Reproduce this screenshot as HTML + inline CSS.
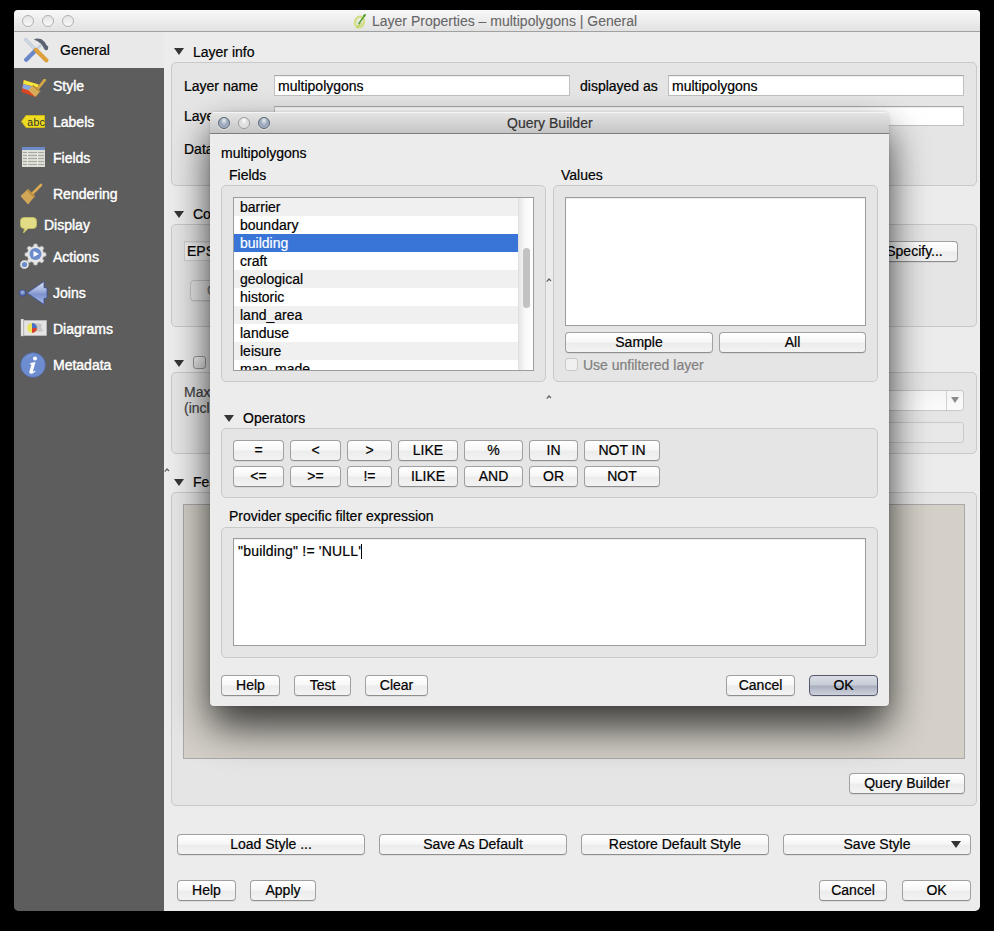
<!DOCTYPE html>
<html><head><meta charset="utf-8">
<style>
*{box-sizing:border-box;margin:0;padding:0}
html,body{width:994px;height:931px;overflow:hidden;background:#000}
body{position:relative;font-family:"Liberation Sans",sans-serif;font-size:14px;color:#000;-webkit-text-stroke:0.2px}
.a{position:absolute}
.t{position:absolute;white-space:nowrap;line-height:16px}
.tl{position:absolute;width:12px;height:12px;border-radius:50%;border:1px solid #b0b0b0;background:linear-gradient(#e4e4e4,#f8f8f8)}
.tlb{position:absolute;width:12px;height:12px;border-radius:50%;border:1px solid #5b6573;background:radial-gradient(ellipse at 50% 25%,#eef2f6 0,#b4bfcd 30%,#95a3b6 55%,#c8d1dc 100%);box-shadow:0 1px 0 rgba(255,255,255,0.5)}
.grp{position:absolute;border:1px solid #c9c9c9;border-radius:5px;background:#e5e5e5}
.inp{position:absolute;background:#fff;border:1px solid #c0c0c0;border-top-color:#a8a8a8;box-shadow:inset 0 1px 1px rgba(0,0,0,0.07)}
.btn{position:absolute;height:21px;border:1px solid #a0a0a0;border-bottom-color:#8e8e8e;border-radius:4px;background:linear-gradient(#ffffff,#f7f7f7 45%,#ececec 55%,#f3f3f3);text-align:center;line-height:19px;white-space:nowrap;box-shadow:0 1px 0 rgba(0,0,0,0.06)}
.tri{position:absolute;width:0;height:0;border-left:5px solid transparent;border-right:5px solid transparent;border-top:7px solid #353535}
.si{position:absolute;color:#fff;white-space:nowrap;line-height:16px;text-shadow:0 1px 1px rgba(0,0,0,0.35);-webkit-text-stroke:0.45px #fff}
.row{position:absolute;left:0;width:284px;height:18px;line-height:18px;padding-left:6px;white-space:nowrap}
</style></head><body>
<!-- main window -->
<div class="a" style="left:14px;top:10px;width:966px;height:901px;background:linear-gradient(to right,#5d5d5d 150px,#ececec 150px);border-radius:4px 4px 5px 5px;overflow:hidden">
  <div class="a" style="left:0;top:0;width:966px;height:22px;background:linear-gradient(#f8f8f8,#e2e2e2);border-bottom:1px solid #a0a0a0"></div>
  <div class="a" style="left:0;top:22px;width:150px;height:879px;background:#5d5d5d"></div>
  <div class="a" style="left:0;top:22px;width:150px;height:36px;background:#e9e9e9"></div>
</div>
<div class="tl" style="left:22px;top:15px"></div>
<div class="tl" style="left:42px;top:15px"></div>
<div class="tl" style="left:62px;top:15px"></div>
<div class="t" style="left:372px;top:13px;color:#666;-webkit-text-stroke:0.1px">Layer Properties – multipolygons | General</div>


<!-- sidebar icons -->
<svg class="a" style="left:24px;top:38px" width="25" height="25" viewBox="0 0 25 25">
  <line x1="1" y1="1" x2="11" y2="11" stroke="#a9b3c8" stroke-width="3" stroke-linecap="round"/>
  <line x1="1" y1="1" x2="11" y2="11" stroke="#d3dae8" stroke-width="1.8" stroke-linecap="round"/>
  <line x1="2.2" y1="21.8" x2="11.5" y2="12.5" stroke="#6a86c8" stroke-width="4.2" stroke-linecap="round"/>
  <line x1="12.5" y1="11.5" x2="17" y2="7" stroke="#c8d0de" stroke-width="2.8"/>
  <path d="M9.8,1.6 Q13,-0.4 17.5,1.2 Q20.8,3.2 22.6,7.2 L24.2,8.6 L24,11.6 L21.8,12.4 L20.2,11 Q18.6,7.6 16.6,5.6 Q14,3.2 9.8,1.6 Z" fill="#5b6372"/>
  <line x1="12" y1="12" x2="22.3" y2="22.3" stroke="#dc9c38" stroke-width="4.2" stroke-linecap="round"/>
  <line x1="13" y1="12.5" x2="22" y2="21.5" stroke="#f0c060" stroke-width="1" stroke-dasharray="1 1"/>
</svg>
<svg class="a" style="left:21px;top:79px" width="26" height="19" viewBox="0 0 26 19">
  <path d="M2.8,0.9 L17.6,5.4 L14.4,17.9 L0.5,13.1 Z" fill="#de4422"/>
  <path d="M2.8,0.9 L17.6,5.4 L16.6,8.6 L2.2,5 Z" fill="#f2ea3a"/>
  <path d="M2.2,5 L13,8 L9.5,12 L1.2,9.2 Z" fill="#86a8e0"/>
  <line x1="17.4" y1="9" x2="23.6" y2="1.2" stroke="#d4a848" stroke-width="2.8" stroke-linecap="round"/>
  <path d="M7.3,11.2 L12.1,6 L19.5,12.1 L14.4,17.9 Z" fill="#d6ac58"/>
  <path d="M12.1,6 L19.5,12.1 L18.6,13.2 L11.2,7 Z" fill="#b88c34"/>
</svg>
<svg class="a" style="left:21px;top:115px" width="25" height="14" viewBox="0 0 25 14">
  <path d="M5,0.5 L23.5,0.5 L23.5,12.5 L5,12.5 L0.5,6.5 Z" fill="#eedd22" stroke="#cdb818" stroke-width="1"/>
  <text x="6.3" y="10.5" font-family="Liberation Sans" font-size="10.5" letter-spacing="0.3" fill="#2a2a2a" style="-webkit-text-stroke:0">abc</text>
</svg>
<svg class="a" style="left:22px;top:147px" width="23" height="20" viewBox="0 0 23 20">
  <rect x="0" y="0" width="23" height="20" fill="#dcded6"/>
  <rect x="0" y="0" width="23" height="3" fill="#6d8bc8"/>
  <g stroke="#a2a29a" stroke-width="0.9">
    <line x1="1" y1="5.5" x2="22" y2="5.5"/><line x1="1" y1="8.5" x2="22" y2="8.5"/><line x1="1" y1="11.5" x2="22" y2="11.5"/><line x1="1" y1="14.5" x2="22" y2="14.5"/><line x1="1" y1="17.5" x2="22" y2="17.5"/>
  </g>
  <g stroke="#e8e8e2" stroke-width="1"><line x1="5.5" y1="3" x2="5.5" y2="20"/><line x1="15.5" y1="3" x2="15.5" y2="20"/></g>
</svg>
<svg class="a" style="left:20px;top:183px" width="23" height="23" viewBox="0 0 23 23">
  <line x1="13" y1="10" x2="21" y2="2" stroke="#d9aa50" stroke-width="2.6" stroke-linecap="round"/>
  <path d="M0.5,13 L8,6 L15,13 L8,21.5 Z" fill="#d2a858"/>
  <path d="M8,6 L15,13 L14,15 L7,8 Z" fill="#b8903c"/>
</svg>
<svg class="a" style="left:20px;top:217px" width="17" height="17" viewBox="0 0 17 17">
  <path d="M4,0.5 H13 Q16.5,0.5 16.5,4 V8 Q16.5,11.5 13,11.5 H8 L3.5,16 L4.5,11.5 Q0.5,11.5 0.5,8 V4 Q0.5,0.5 4,0.5 Z" fill="#e3dc86" stroke="#c8c060" stroke-width="0.8"/>
</svg>
<svg class="a" style="left:19px;top:243px" width="28" height="28" viewBox="0 0 28 28">
  <g transform="translate(-1.5,0)"><g fill="#e6e6e6" stroke="#b0b0b0" stroke-width="0.7" stroke-linejoin="round">
    <path d="M16.5,1 h3 l0.6,2.4 l2.2,0.9 l2.1,-1.3 l2.1,2.1 l-1.3,2.1 l0.9,2.2 l2.4,0.6 v3 l-2.4,0.6 l-0.9,2.2 l1.3,2.1 l-2.1,2.1 l-2.1,-1.3 l-2.2,0.9 l-0.6,2.4 h-3 l-0.6,-2.4 l-2.2,-0.9 l-2.1,1.3 l-2.1,-2.1 l1.3,-2.1 l-0.9,-2.2 l-2.4,-0.6 v-3 l2.4,-0.6 l0.9,-2.2 l-1.3,-2.1 l2.1,-2.1 l2.1,1.3 l2.2,-0.9 Z"/>
  </g>
  <circle cx="18" cy="11" r="6" fill="#6c8ccc"/>
  <path d="M16,8 L21.5,11 L16,14 Z" fill="#fff"/></g>
  <circle cx="5.5" cy="21.5" r="4.3" fill="#e6e6e6" stroke="#bdbdbd" stroke-width="0.6" stroke-dasharray="1.5 1"/>
  <circle cx="5.5" cy="21.5" r="2.6" fill="#6c8ccc"/>
</svg>
<svg class="a" style="left:18px;top:280px" width="30" height="26" viewBox="0 0 30 26">
  <defs><linearGradient id="jg" x1="0" y1="0" x2="0" y2="1"><stop offset="0" stop-color="#dfe8f8"/><stop offset="0.45" stop-color="#96a8d8"/><stop offset="0.55" stop-color="#7e92cc"/><stop offset="1" stop-color="#a8baee"/></linearGradient>
  <radialGradient id="jc" cx="0.5" cy="0.35" r="0.6"><stop offset="0" stop-color="#a8b8e8"/><stop offset="1" stop-color="#4a62a8"/></radialGradient></defs>
  <circle cx="4.5" cy="13" r="3.2" fill="url(#jc)" stroke="#34488a" stroke-width="0.7"/>
  <path d="M9,13 L26,1.5 L26,7.5 L29,8 L29,18 L26,18.5 L26,24.5 Z" fill="url(#jg)" stroke="#3a4e92" stroke-width="0.8" stroke-linejoin="round"/>
</svg>
<svg class="a" style="left:20px;top:319px" width="27" height="18" viewBox="0 0 27 18">
  <rect x="1" y="0" width="2.5" height="17" fill="#ececec" stroke="#b8b8b8" stroke-width="0.5"/>
  <rect x="4" y="1.5" width="22.5" height="15" fill="#e4e4e4" stroke="#c8c8c8" stroke-width="0.6"/>
  <path d="M8,5 Q14,3 22,5 Q20,9 24,12 Q17,14 12,11 Z" fill="#c8c8c8"/>
  <circle cx="12" cy="9" r="5" fill="#ece460"/>
  <path d="M12,9 L12,4 A5,5 0 0 1 17,9 Z" fill="#4870c8"/>
  <path d="M12,9 L17,9 A5,5 0 0 1 12,14 Z" fill="#d84030"/>
</svg>
<svg class="a" style="left:20px;top:352px" width="26" height="26" viewBox="0 0 26 26">
  <circle cx="13" cy="13" r="12.3" fill="#6e8dd0" stroke="#5670b0" stroke-width="0.8"/>
  <path d="M5,9 Q8,3 14,2.5 Q7,4.5 5,9 Z" fill="#9fb4e4"/>
  <circle cx="15" cy="6.5" r="2" fill="#fff"/>
  <path d="M10.5,11 L15.5,10 L13,19 Q13,20 15,18.5 L15.5,19.5 Q12,22.5 10,21.5 Q9,21 9.5,19 L11.5,12.5 L10,12.6 Z" fill="#fff"/>
</svg>
<!-- title icon -->
<svg class="a" style="left:353px;top:13px" width="14" height="16" viewBox="0 0 14 16">
  <ellipse cx="6.5" cy="9" rx="4.3" ry="5.3" fill="none" stroke="#d3df86" stroke-width="2.6" transform="rotate(20 6.5 9)"/>
  <path d="M4,15 Q6,12 8,10" stroke="#bcd060" stroke-width="1.6" fill="none"/>
  <path d="M5.5,11 L12,2" stroke="#4c9a2c" stroke-width="1.3"/>
  <path d="M13,0.8 L9.6,2.2 L12,4 Z" fill="#4c9a2c"/>
</svg>

<!-- sidebar -->
<div class="t" style="left:60px;top:42px">General</div>
<div class="si" style="left:53px;top:78px">Style</div>
<div class="si" style="left:53px;top:114px">Labels</div>
<div class="si" style="left:53px;top:150px">Fields</div>
<div class="si" style="left:53px;top:186px">Rendering</div>
<div class="si" style="left:44px;top:217px">Display</div>
<div class="si" style="left:53px;top:249px">Actions</div>
<div class="si" style="left:53px;top:285px">Joins</div>
<div class="si" style="left:53px;top:321px">Diagrams</div>
<div class="si" style="left:53px;top:357px">Metadata</div>

<!-- layer info -->
<div class="tri" style="left:174px;top:48px"></div>
<div class="t" style="left:193px;top:44px">Layer info</div>
<div class="grp" style="left:171px;top:62px;width:806px;height:124px"></div>
<div class="t" style="left:184px;top:78px">Layer name</div>
<div class="inp" style="left:274px;top:75px;width:296px;height:21px"></div>
<div class="t" style="left:278px;top:78px">multipolygons</div>
<div class="t" style="left:580px;top:78px">displayed as</div>
<div class="inp" style="left:668px;top:75px;width:296px;height:21px"></div>
<div class="t" style="left:672px;top:78px">multipolygons</div>
<div class="t" style="left:184px;top:108px">Laye</div>
<div class="inp" style="left:274px;top:106px;width:690px;height:20px"></div>
<div class="t" style="left:184px;top:141px">Data</div>

<!-- coordinate system -->
<div class="tri" style="left:174px;top:211px"></div>
<div class="t" style="left:193px;top:206px">Co</div>
<div class="grp" style="left:171px;top:224px;width:806px;height:103px"></div>
<div class="inp" style="left:184px;top:241px;width:700px;height:20px;background:#f2f2f2;border-color:#d0d0d0"></div>
<div class="t" style="left:187px;top:243px">EPSG</div>
<div class="btn" style="left:880px;top:241px;width:78px;padding-right:9px">Specify...</div>
<div class="btn" style="left:190px;top:280px;width:200px;background:#e8e8e8;border-color:#c4c4c4;color:#777;text-align:left;padding-left:16px">Create spatial index</div>

<!-- scale -->
<div class="tri" style="left:174px;top:360px"></div>
<div class="a" style="left:193px;top:356px;width:13px;height:13px;border:1px solid #9a9a9a;border-radius:3px;background:linear-gradient(#f6f6f6,#dedede)"></div>
<div class="grp" style="left:171px;top:372px;width:806px;height:82px"></div>
<div class="t" style="left:184px;top:384px;color:#444">Max</div>
<div class="t" style="left:184px;top:400px;color:#444">(incl</div>
<div class="a" style="left:860px;top:390px;width:104px;height:21px;border:1px solid #c8c8c8;border-radius:3px;background:linear-gradient(#f4f4f4,#fbfbfb)"></div>
<div class="a" style="left:946px;top:391px;width:1px;height:19px;background:#d0d0d0"></div>
<div class="a" style="left:951px;top:397px;width:0;height:0;border-left:4px solid transparent;border-right:4px solid transparent;border-top:6px solid #8a8a8a"></div>
<div class="a" style="left:860px;top:422px;width:104px;height:21px;border:1px solid #cacaca;border-radius:3px;background:#e8e8e8"></div>

<!-- features -->
<svg class="a" style="left:164px;top:468px" width="6" height="5" viewBox="0 0 6 5"><path d="M0.7,3.6 L3,1 L5,3" fill="none" stroke="#606060" stroke-width="1.2"/></svg>
<div class="tri" style="left:174px;top:479px"></div>
<div class="t" style="left:193px;top:474px">Features</div>
<div class="grp" style="left:171px;top:492px;width:806px;height:314px"></div>
<div class="a" style="left:183px;top:504px;width:782px;height:255px;background:#d4d0c8;border:1px solid #a9a9a9"></div>
<div class="btn" style="left:849px;top:773px;width:116px">Query Builder</div>

<!-- bottom buttons -->
<div class="btn" style="left:177px;top:834px;width:188px">Load Style ...</div>
<div class="btn" style="left:379px;top:834px;width:188px">Save As Default</div>
<div class="btn" style="left:581px;top:834px;width:188px">Restore Default Style</div>
<div class="btn" style="left:783px;top:834px;width:188px">Save Style</div>
<div class="a" style="left:951px;top:841px;width:0;height:0;border-left:5px solid transparent;border-right:5px solid transparent;border-top:7px solid #333"></div>
<div class="btn" style="left:177px;top:880px;width:59px">Help</div>
<div class="btn" style="left:250px;top:880px;width:66px">Apply</div>
<div class="btn" style="left:819px;top:880px;width:68px">Cancel</div>
<div class="btn" style="left:902px;top:880px;width:69px">OK</div>

<!-- dialog shadow -->
<div class="a" style="left:210px;top:112px;width:679px;height:594px;border-radius:5px;box-shadow:0 18px 36px 0 rgba(0,0,0,0.6),0 0 3px rgba(0,0,0,0.15),0 28px 44px -8px rgba(0,0,0,0.32)"></div>

<!-- dialog -->
<div class="a" style="left:210px;top:112px;width:679px;height:594px;background:#ececec;border-radius:5px 5px 4px 4px;overflow:hidden">
  <div class="a" style="left:0;top:0;width:679px;height:22px;background:linear-gradient(#e6e6e6,#c4c4c4);border-bottom:1px solid #7e7e7e;box-shadow:inset 0 1px 0 rgba(255,255,255,0.6)"></div>
</div>
<div class="tlb" style="left:218px;top:117px"></div>
<div class="tl" style="left:238px;top:117px;border-color:#9a9a9a;background:radial-gradient(ellipse at 50% 25%,#ffffff 0,#dcdcdc 45%,#f2f2f2 100%)"></div>
<div class="tlb" style="left:258px;top:117px"></div>
<div class="t" style="left:507px;top:115px;color:#333">Query Builder</div>

<div class="t" style="left:221px;top:145px">multipolygons</div>
<div class="t" style="left:229px;top:167px">Fields</div>
<div class="grp" style="left:221px;top:185px;width:325px;height:197px"></div>
<div class="a" style="left:233px;top:197px;width:301px;height:174px;background:#fff;border:1px solid #9c9c9c;overflow:hidden">
  <div class="row" style="top:0;background:#f0f0f0">barrier</div>
  <div class="row" style="top:18px">boundary</div>
  <div class="row" style="top:36px;background:#3875d7;color:#fff">building</div>
  <div class="row" style="top:54px">craft</div>
  <div class="row" style="top:72px;background:#f0f0f0">geological</div>
  <div class="row" style="top:90px">historic</div>
  <div class="row" style="top:108px;background:#f0f0f0">land_area</div>
  <div class="row" style="top:126px">landuse</div>
  <div class="row" style="top:144px;background:#f0f0f0">leisure</div>
  <div class="row" style="top:162px">man_made</div>
  <div class="a" style="left:284px;top:0;width:15px;height:172px;background:linear-gradient(to right,#e6e6e6,#f8f8f8 40%,#ffffff);border-left:1px solid #e0e0e0"></div>
  <div class="a" style="left:289px;top:50px;width:7px;height:60px;background:#c2c2c2;border-radius:4px"></div>
</div>
<svg class="a" style="left:546px;top:278px" width="6" height="5" viewBox="0 0 6 5"><path d="M0.7,3.6 L3,1 L5,3" fill="none" stroke="#606060" stroke-width="1.2"/></svg>

<div class="t" style="left:561px;top:167px">Values</div>
<div class="grp" style="left:553px;top:185px;width:325px;height:197px"></div>
<div class="inp" style="left:565px;top:197px;width:301px;height:129px;border-color:#9c9c9c"></div>
<div class="btn" style="left:565px;top:332px;width:148px">Sample</div>
<div class="btn" style="left:719px;top:332px;width:147px">All</div>
<div class="a" style="left:565px;top:358px;width:13px;height:13px;border:1px solid #c8c8c8;border-radius:3px;background:#f0f0f0"></div>
<div class="t" style="left:583px;top:357px;color:#808080">Use unfiltered layer</div>
<svg class="a" style="left:546px;top:395px" width="6" height="5" viewBox="0 0 6 5"><path d="M0.7,3.6 L3,1 L5,3" fill="none" stroke="#606060" stroke-width="1.2"/></svg>

<div class="tri" style="left:224px;top:415px"></div>
<div class="t" style="left:243px;top:410px">Operators</div>
<div class="grp" style="left:221px;top:428px;width:657px;height:70px"></div>
<div class="btn" style="left:233px;top:440px;width:51px">=</div>
<div class="btn" style="left:290px;top:440px;width:51px">&lt;</div>
<div class="btn" style="left:347px;top:440px;width:45px">&gt;</div>
<div class="btn" style="left:398px;top:440px;width:60px">LIKE</div>
<div class="btn" style="left:464px;top:440px;width:59px">%</div>
<div class="btn" style="left:529px;top:440px;width:49px">IN</div>
<div class="btn" style="left:584px;top:440px;width:76px">NOT IN</div>
<div class="btn" style="left:233px;top:466px;width:51px">&lt;=</div>
<div class="btn" style="left:290px;top:466px;width:51px">&gt;=</div>
<div class="btn" style="left:347px;top:466px;width:45px">!=</div>
<div class="btn" style="left:398px;top:466px;width:60px">ILIKE</div>
<div class="btn" style="left:464px;top:466px;width:59px">AND</div>
<div class="btn" style="left:529px;top:466px;width:49px">OR</div>
<div class="btn" style="left:584px;top:466px;width:76px">NOT</div>

<div class="t" style="left:229px;top:508px">Provider specific filter expression</div>
<div class="grp" style="left:221px;top:527px;width:657px;height:131px"></div>
<div class="inp" style="left:233px;top:538px;width:633px;height:108px;border-color:#9c9c9c"></div>
<div class="t" style="left:238px;top:543px;letter-spacing:0.2px">"building" != 'NULL'</div>
<div class="a" style="left:361px;top:544px;width:1px;height:15px;background:#000"></div>

<div class="btn" style="left:221px;top:675px;width:59px">Help</div>
<div class="btn" style="left:294px;top:675px;width:57px">Test</div>
<div class="btn" style="left:365px;top:675px;width:63px">Clear</div>
<div class="btn" style="left:726px;top:675px;width:69px">Cancel</div>
<div class="btn" style="left:809px;top:675px;width:69px;background:linear-gradient(#dadde5,#c8ccd5 46%,#a9afbf 54%,#bfc4d0 80%,#cdd1da);border-color:#56586e">OK</div>
</body></html>
